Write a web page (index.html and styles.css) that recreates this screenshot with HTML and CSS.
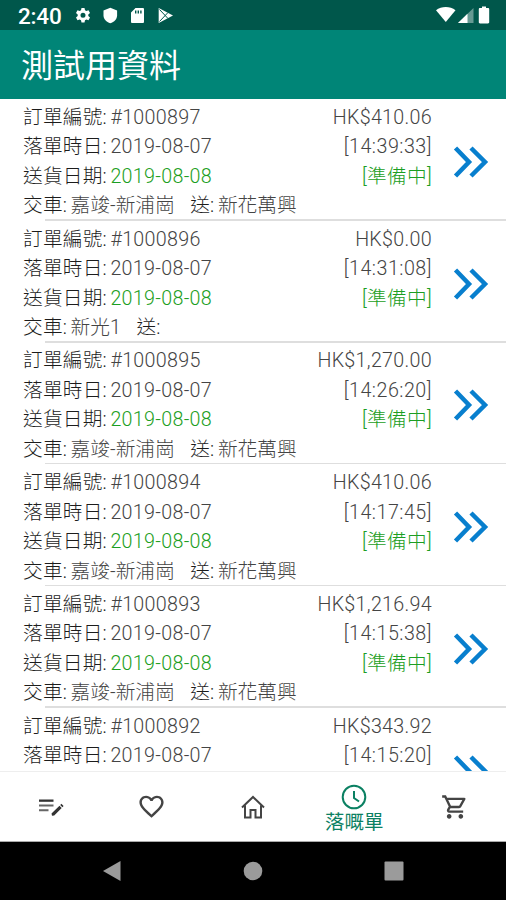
FILE: index.html
```
<!DOCTYPE html>
<html lang="zh-Hant">
<head>
    <meta charset="UTF-8">
    <meta name="viewport" content="width=device-width, initial-scale=1.0">
    <title>測試用資料</title>
    <link rel="stylesheet" href="styles.css">
</head>
<body>
    <div class="status-bar">
        <span class="clock">2:40</span>
        <svg class="status-icons" width="100" height="20" viewBox="0 0 100 20" fill="#fff">
            <path d="M6.5 2h3l.5 2.2 1.4.8 2.1-.7L15 6.900l-1.700 1.500v1.700l1.700 1.500-1.500 2.600-2.100-.7-1.400.8-.5 2.200h-3L6 14.300l-1.400-.8-2.100.7L1 11.600l1.700-1.500V8.400L1 6.900l1.500-2.600 2.100.7L6 4.200zM8 6.800a2.500 2.500 0 1 0 0 5 2.500 2.500 0 0 0 0-5z" fill-rule="evenodd"/>
            <path d="M35.300 1.800l6.800 2.700v4.700c0 4-2.900 6.700-6.800 8.100-3.900-1.400-6.800-4.100-6.800-8.100V4.500z"/>
            <path d="M60.500 2h7.200c.8 0 1.300.5 1.300 1.300v12.400c0 .8-.5 1.300-1.300 1.300H57.300c-.8 0-1.300-.5-1.300-1.300V6.500zM60 4.500v3h1.400v-3zm2.600 0v3H64v-3zm2.600 0v3h1.400v-3z" fill-rule="evenodd"/>
            <path d="M83.700 2l14.300 7.500L83.700 17z"/>
            <path d="M84.500 3.500l8.500 9M84.500 15.500l8.500-9" stroke="#00574b" stroke-width="1"/>
        </svg>
        <svg class="signal-icons" width="58" height="20" viewBox="0 0 58 20" fill="#fff">
            <path d="M0 4.200c5.500-4.300 14-4.300 19.500 0L9.800 16z"/>
            <path d="M22 17L37.500 2v15z" opacity=".4"/>
            <path d="M22 17l9.500-9.200V17z"/>
            <path d="M48 .5h4v1.600h2c.7 0 1.200.5 1.200 1.200v12.900c0 .7-.5 1.200-1.200 1.200h-8c-.7 0-1.200-.5-1.200-1.200V3.300c0-.7.5-1.200 1.200-1.200h2z" transform="translate(-2 0)"/>
        </svg>
    </div>
    <div class="app-bar">測試用資料</div>

    <div class="orders" id="orders"></div>

    <div class="tabs">
        <div class="tab">
            <svg width="28" height="28" viewBox="0 0 28 28" fill="#333">
                <path d="M2 6.500h14.500v2.300H2z"/>
                <path d="M2 11.500h14.500v2H2zM2 16.200h9.500v2H2z" fill="#666"/>
                <path d="M14.500 20.500l.5 2.300 2.200-.3 7.500-7.500-2.200-2.300zM23.200 12l2.200 2.300 1.200-1.200-2.200-2.300z"/>
            </svg>
        </div>
        <div class="tab">
            <svg width="29" height="29" viewBox="0 0 24 24" fill="#444">
                <path d="M16.500 3c-1.740 0-3.410.81-4.500 2.090C10.910 3.810 9.240 3 7.500 3 4.420 3 2 5.420 2 8.500c0 3.780 3.400 6.860 8.550 11.540L12 21.350l1.450-1.320C18.600 15.360 22 12.280 22 8.500 22 5.420 19.580 3 16.500 3zm-4.400 15.550l-.1.100-.1-.1C7.140 14.240 4 11.390 4 8.500 4 6.500 5.500 5 7.500 5c1.540 0 3.040.99 3.570 2.360h1.870C13.460 5.990 14.960 5 16.500 5c2 0 3.500 1.500 3.500 3.500 0 2.890-3.140 5.740-7.900 10.050z"/>
            </svg>
        </div>
        <div class="tab">
            <svg width="30" height="30" viewBox="0 0 30 30" fill="none" stroke="#444" stroke-width="2">
                <path d="M4 15.500L15 5l11 10.500M7 13.500v12h5.500V18h5v7.500H23v-12"/>
            </svg>
        </div>
        <div class="tab active">
            <svg width="28" height="28" viewBox="0 0 28 28" fill="none" stroke="#0b8062" stroke-width="2">
                <circle cx="14" cy="14" r="11.300"/>
                <path d="M14 8v7l5 3.500"/>
            </svg>
            <span class="tab-label">落嘅單</span>
        </div>
        <div class="tab">
            <svg width="28" height="28" viewBox="0 0 24 24" fill="#444">
                <path d="M15.550 13c.75 0 1.410-.41 1.750-1.030l3.580-6.490A.996.996 0 0 0 20.010 4H5.210l-.94-2H1v2h2l3.600 7.590-1.350 2.440C4.520 15.370 5.480 17 7 17h12v-2H7l1.100-2h7.450zM6.160 6h12.150l-2.760 5H8.530L6.160 6zM7 18c-1.100 0-1.990.9-1.990 2S5.900 22 7 22s2-.9 2-2-.9-2-2-2zm10 0c-1.100 0-1.990.9-1.990 2s.89 2 1.990 2 2-.9 2-2-.9-2-2-2z"/>
            </svg>
        </div>
    </div>

    <div class="system-nav">
        <svg width="20" height="22" viewBox="0 0 20 22"><path d="M1 11L18.500 1v20z" fill="#9b9b9b"/></svg>
        <svg width="20" height="20" viewBox="0 0 20 20"><circle cx="10" cy="10" r="9.300" fill="#9b9b9b"/></svg>
        <svg width="20" height="20" viewBox="0 0 20 20"><rect x=".5" y=".5" width="19" height="19" rx="1" fill="#9b9b9b"/></svg>
    </div>

    <script src="orders.js"></script>
</body>
</html>
```
FILE: styles.css
```
* {
    box-sizing: border-box;
}
body {
    margin: 0;
    height: 900px;
    display: flex;
    flex-direction: column;
    overflow: hidden;
    background-color: #fff;
    font-family: Roboto, "Noto Sans CJK TC", sans-serif;
}
svg {
    display: block;
    flex: none;
}
.status-bar {
    flex: none;
    height: 30px;
    display: flex;
    align-items: center;
    padding: 2px 12px 0 18px;
    background-color: #00574b;
    color: #fff;
}
.clock {
    width: 57px;
    font-size: 22.500px;
    font-weight: 500;
    letter-spacing: -0.2px;
}
.signal-icons {
    margin-left: auto;
}
.app-bar {
    flex: none;
    height: 68.500px;
    padding: 2px 21px 0;
    line-height: 68px;
    font-size: 32px;
    background-color: #008577;
    color: #fff;
}
.orders {
    flex: 1;
    min-height: 0;
    overflow: hidden;
    padding-top: 1.300px;
}
.order {
    height: 121.800px;
    display: flex;
    flex-direction: column;
    padding-top: 3px;
    font-size: 19.700px;
    font-weight: 300;
    line-height: 29.500px;
    color: #444;
    white-space: nowrap;
}
.order-main {
    display: flex;
    height: 88.500px;
    padding: 0 16px 0 23px;
}
.order-info {
    flex: 1;
}
.line {
    display: flex;
    height: 29.500px;
}
.label {
    margin-right: 3.500px;
    letter-spacing: 0.2px;
    color: #1c1c1c;
}
.value {
    letter-spacing: 0.3px;
}
.amount {
    margin-left: auto;
    letter-spacing: 0.3px;
}
.time {
    letter-spacing: 0.500px;
}
.green {
    color: #1b9e22;
}
.chevron {
    margin: 42px 0 0 20px;
}
.delivery {
    height: 28px;
    padding-left: 23px;
}
.car {
    margin-right: 15.500px;
}
.divider {
    height: 1.500px;
    margin-left: 45px;
    background-color: #dedede;
}
.tabs {
    flex: none;
    height: 71px;
    display: flex;
    border-top: 1px solid #eee;
    border-bottom: 1px solid #aaa;
    background-color: #fff;
}
.tab {
    flex: 1;
    display: flex;
    flex-direction: column;
    align-items: center;
    justify-content: center;
}
.active {
    justify-content: flex-start;
    padding-top: 11px;
    color: #0b8062;
}
.tab-label {
    font-size: 19.500px;
    line-height: 24px;
}
.system-nav {
    flex: none;
    height: 58px;
    display: flex;
    align-items: center;
    justify-content: space-between;
    padding: 0 102px;
    background-color: #000;
}
```
FILE: orders.js
```
const orders = [
    {id: 1000897, amount: '410.06', time: '14:39:33', status: '準備中', car: '嘉竣-新浦崗', to: '新花萬興'},
    {id: 1000896, amount: '0.00', time: '14:31:08', status: '準備中', car: '新光1', to: ''},
    {id: 1000895, amount: '1,270.00', time: '14:26:20', status: '準備中', car: '嘉竣-新浦崗', to: '新花萬興'},
    {id: 1000894, amount: '410.06', time: '14:17:45', status: '準備中', car: '嘉竣-新浦崗', to: '新花萬興'},
    {id: 1000893, amount: '1,216.94', time: '14:15:38', status: '準備中', car: '嘉竣-新浦崗', to: '新花萬興'},
    {id: 1000892, amount: '343.92', time: '14:15:20'}
];

function statusLine(order) {
    if (!order.status) return '';
    return `<div class="line"><span class="label">送貨日期:</span><span class="value green">2019-08-08</span><span class="amount green">[${order.status}]</span></div>`;
}

function deliveryLine(order) {
    if (!order.car) return '';
    return `
        <div class="line delivery"><span class="label">交車:</span><span class="car">${order.car}</span><span class="label">送:</span><span>${order.to}</span></div>
        <div class="divider"></div>`;
}

document.getElementById('orders').innerHTML = orders.map(order => `
    <div class="order">
        <div class="order-main">
            <div class="order-info">
                <div class="line"><span class="label">訂單編號:</span><span class="value">#${order.id}</span><span class="amount">HK$${order.amount}</span></div>
                <div class="line"><span class="label">落單時日:</span><span class="value">2019-08-07</span><span class="amount time">[${order.time}]</span></div>
                ${statusLine(order)}
            </div>
            <svg class="chevron" width="38" height="34" viewBox="0 0 38 34" fill="none" stroke="#087fce" stroke-width="4.500">
                <path d="M3.500 3l13.500 14L3.500 31M19 3l14 14-14 14"/>
            </svg>
        </div>
        ${deliveryLine(order)}
    </div>
`).join('');
```
